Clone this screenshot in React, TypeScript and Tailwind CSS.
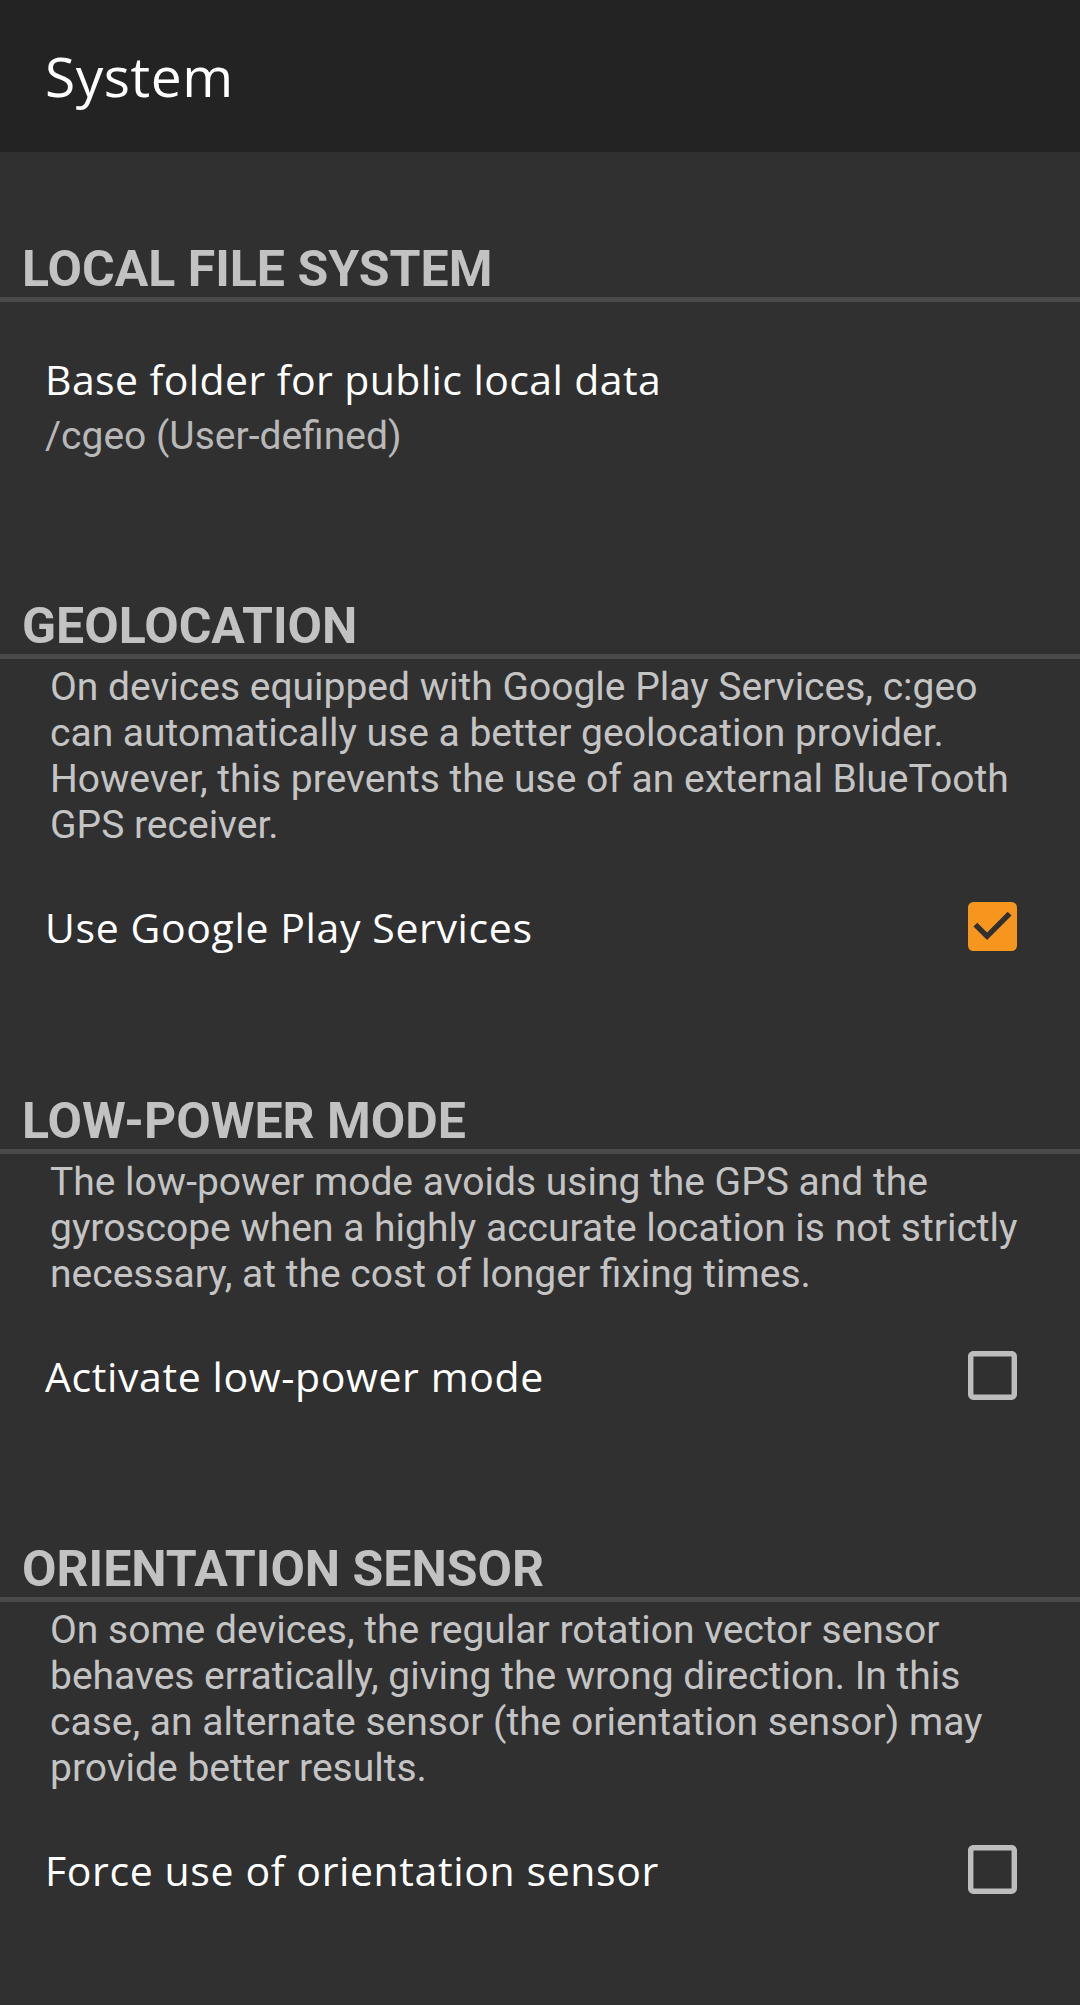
import React from 'react';

const titleFont = { fontFamily: '"Open Sans", "Noto Sans", sans-serif' };

const CheckBox = ({ checked }: { checked: boolean }) =>
  checked ? (
    <svg viewBox="3 3 18 18" className="w-[49px] h-[49px]">
      <rect x="3" y="3" width="18" height="18" rx="2" fill="#f7961f" />
      <path d="M10 17l-5-5 1.41-1.41L10 14.17l7.59-7.59L19 8l-9 9z" fill="#303030" />
    </svg>
  ) : (
    <svg viewBox="3 3 18 18" className="w-[49px] h-[49px]">
      <path
        d="M19 5v14H5V5h14m0-2H5c-1.1 0-2 .9-2 2v14c0 1.1.9 2 2 2h14c1.1 0 2-.9 2-2V5c0-1.1-.9-2-2-2z"
        fill="#bdbdbd"
      />
    </svg>
  );

const Category = ({ title, className }: { title: string; className: string }) => (
  <div className={className}>
    <div className="pl-[22px] text-[50px] leading-[55px] font-bold text-[#c2c2c2] font-['Roboto',sans-serif]">
      {title}
    </div>
    <div className="h-[5px] bg-[#4a4a4a]" />
  </div>
);

const Description = ({ text }: { text: string }) => (
  <p className="mt-[5px] pl-[50px] pr-[45px] text-[39px] leading-[46px] text-[#c4c4c4] font-['Roboto',sans-serif]">
    {text}
  </p>
);

const CheckRow = ({ label, checked, className }: { label: string; checked: boolean; className: string }) => (
  <div className={`flex items-center justify-between pl-[45px] pr-[63px] ${className}`}>
    <span className="text-[41px] leading-[48px] text-white tracking-[0.015em]" style={titleFont}>
      {label}
    </span>
    <CheckBox checked={checked} />
  </div>
);

export default function App() {
  return (
    <div className="min-h-[2005px] w-[1080px] bg-[#303030]">
      <header className="h-[152px] bg-[#232323] flex items-center pl-[45px]">
        <h1 className="text-[55px] text-white tracking-[0.01em]" style={titleFont}>
          System
        </h1>
      </header>

      <Category title="LOCAL FILE SYSTEM" className="pt-[90px]" />
      <div className="pt-[53px] pl-[45px]">
        <div className="text-[41px] leading-[48px] text-white tracking-[0.01em]" style={titleFont}>
          Base folder for public local data
        </div>
        <div className="mt-[10px] text-[39px] leading-[46px] text-[#b8b8b8] font-['Roboto',sans-serif]">
          /cgeo (User-defined)
        </div>
      </div>

      <Category title="GEOLOCATION" className="pt-[140px]" />
      <Description text="On devices equipped with Google Play Services, c:geo can automatically use a better geolocation provider. However, this prevents the use of an external BlueTooth GPS receiver." />
      <CheckRow label="Use Google Play Services" checked className="mt-[54px]" />

      <Category title="LOW-POWER MODE" className="pt-[143px]" />
      <Description text="The low-power mode avoids using the GPS and the gyroscope when a highly accurate location is not strictly necessary, at the cost of longer fixing times." />
      <CheckRow label="Activate low-power mode" checked={false} className="mt-[54px]" />

      <Category title="ORIENTATION SENSOR" className="pt-[142px]" />
      <Description text="On some devices, the regular rotation vector sensor behaves erratically, giving the wrong direction. In this case, an alternate sensor (the orientation sensor) may provide better results." />
      <CheckRow label="Force use of orientation sensor" checked={false} className="mt-[54px]" />
    </div>
  );
}
